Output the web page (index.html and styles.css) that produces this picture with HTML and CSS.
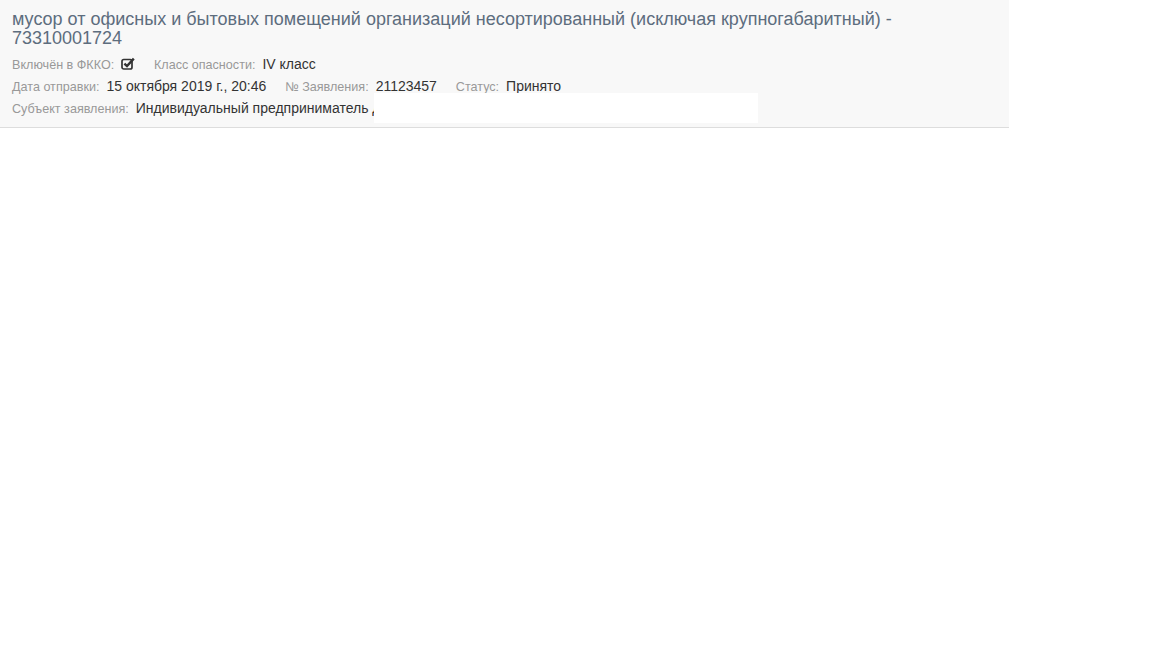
FILE: index.html
```html
<!DOCTYPE html>
<html lang="ru">
<head>
  <meta charset="UTF-8" />
  <title>Заявление</title>
  <link rel="stylesheet" href="styles.css">
</head>
<body>
  <div class="waste-card">
    <div class="waste-title">мусор от офисных и бытовых помещений организаций несортированный (исключая крупногабаритный) - 73310001724</div>
    <div class="waste-row">
      <span class="item"><span class="label">Включён в ФККО:</span>
        <svg class="check" width="14" height="13" viewBox="0 0 14 13"><rect x="1" y="2.5" width="10" height="9.5" rx="1.8" fill="none" stroke="#333" stroke-width="1.7"/><path d="M3.4 6.6 L6 9.1 L12.8 1.6" fill="none" stroke="#333" stroke-width="2.4"/></svg>
      </span>
      <span class="item"><span class="label">Класс опасности:</span><span class="value">IV класс</span></span>
    </div>
    <div class="waste-row">
      <span class="item"><span class="label">Дата отправки:</span><span class="value">15 октября 2019 г., 20:46</span></span>
      <span class="item"><span class="label">№ Заявления:</span><span class="value">21123457</span></span>
      <span class="item"><span class="label">Статус:</span><span class="value">Принято</span></span>
    </div>
    <div class="waste-row subject">
      <span class="item"><span class="label">Субъект заявления:</span><span class="value">Индивидуальный предприниматель Д</span></span>
      <span class="redact"></span>
    </div>
  </div>
</body>
</html>
```

FILE: styles.css
```css
body {
  margin: 0;
  font-family: "Liberation Sans", Arial, sans-serif;
  background: #fff;
  color: #333;
}
.waste-card {
  width: 997px;
  background: #f8f8f8;
  border-bottom: 1px solid #dddddd;
  padding: 10px 0 9px 12px;
}
.waste-title {
  font-size: 18px;
  line-height: 19px;
  color: #5d6d7e;
  margin-bottom: 5px;
  padding-right: 100px;
}
.waste-row {
  font-size: 14px;
  line-height: 22px;
  height: 22px;
}
.waste-row .item {
  margin-right: 15px;
}
.label {
  font-size: 12.6px;
  color: #999;
}
.value {
  color: #333;
  margin-left: 7px;
}
.check {
  vertical-align: -1px;
  margin-left: 3px;
}
.subject {
  position: relative;
  height: 21px;
}
.redact {
  position: absolute;
  left: 362px;
  top: -4px;
  width: 384px;
  height: 30px;
  background: #fff;
}
```
